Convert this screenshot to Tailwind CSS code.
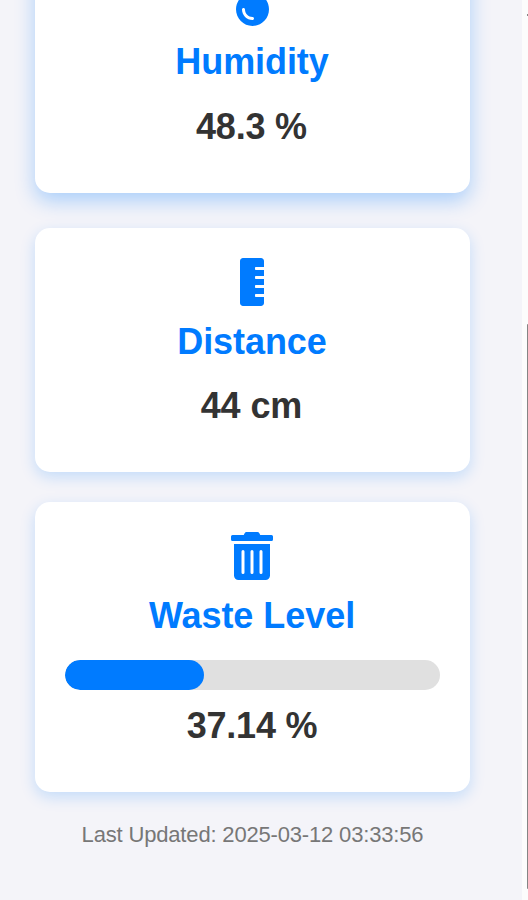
<!DOCTYPE html>
<html lang="en">
<head>
<meta charset="utf-8">
<title>Waste Monitor</title>
<script src="https://cdn.jsdelivr.net/npm/@tailwindcss/browser@4"></script>
</head>
<body class="h-[900px] overflow-hidden bg-[#fcfcfc] font-['Liberation_Sans',Arial,sans-serif]">
<div class="flex h-full justify-between overflow-hidden">
  <main class="flex h-full w-[522px] shrink-0 flex-col bg-[#f4f4f9] pl-[35px] text-center">
    <section class="-mt-[52px] flex h-[245px] w-[435px] shrink-0 flex-col items-center rounded-[15px] bg-white px-[30px] pt-[30px] shadow-[0_8px_20px_rgba(0,123,255,0.3)]">
      <svg class="mr-px h-12 w-[33px] shrink-0 fill-[#007bff]" viewBox="0 0 352 512"><path d="M205.22 22.09c-7.94-28.78-49.44-30.12-58.44 0C100.01 179.85 0 222.72 0 333.91 0 432.35 78.72 512 176 512s176-79.65 176-178.09c0-111.75-99.79-153.34-146.78-311.82zM176 448c-61.75 0-112-50.25-112-112 0-8.84 7.16-16 16-16s16 7.16 16 16c0 44.11 35.89 80 80 80 8.84 0 16 7.16 16 16s-7.16 16-16 16z"/></svg>
      <h2 class="mt-[15px] mr-px text-[36px] leading-[41px] font-bold tracking-[-0.08px] text-[#007bff]">Humidity</h2>
      <p class="mt-6 mr-[2px] text-[36px] leading-[41px] font-bold tracking-[-0.2px] text-[#333]">48.3 %</p>
    </section>
    <section class="mt-[35px] flex h-[244px] w-[435px] shrink-0 flex-col items-center rounded-[15px] bg-white px-[30px] pt-[30px] shadow-[0_5px_15px_rgba(0,123,255,0.2)]">
      <svg class="mr-[2px] h-12 w-6 shrink-0 fill-[#007bff]" viewBox="0 0 256 512"><path d="M168 416c-4.42 0-8-3.58-8-8v-16c0-4.42 3.58-8 8-8h88v-64h-88c-4.42 0-8-3.58-8-8v-16c0-4.42 3.58-8 8-8h88v-64h-88c-4.42 0-8-3.58-8-8v-16c0-4.42 3.58-8 8-8h88v-64h-88c-4.42 0-8-3.58-8-8v-16c0-4.42 3.58-8 8-8h88V32c0-17.67-14.33-32-32-32H32C14.33 0 0 14.33 0 32v448c0 17.67 14.33 32 32 32h192c17.67 0 32-14.33 32-32v-64h-88z"/></svg>
      <h2 class="mt-[15px] mr-px text-[36px] leading-[41px] font-bold tracking-[-0.08px] text-[#007bff]">Distance</h2>
      <p class="mt-[23px] mr-[2px] text-[36px] leading-[41px] font-bold tracking-[-0.1px] text-[#333]">44 cm</p>
    </section>
    <section class="mt-[30px] flex h-[290px] w-[435px] shrink-0 flex-col items-center rounded-[15px] bg-white px-[30px] pt-[30px] shadow-[0_5px_15px_rgba(0,123,255,0.2)]">
      <svg class="mr-[2px] h-12 w-[42px] shrink-0 fill-[#007bff]" viewBox="0 0 448 512"><path d="M32 464a48 48 0 0 0 48 48h288a48 48 0 0 0 48-48V128H32zm272-256a16 16 0 0 1 32 0v224a16 16 0 0 1-32 0zm-96 0a16 16 0 0 1 32 0v224a16 16 0 0 1-32 0zm-96 0a16 16 0 0 1 32 0v224a16 16 0 0 1-32 0zM432 32H312l-9.4-18.7A24 24 0 0 0 281.1 0H166.8a23.72 23.72 0 0 0-21.4 13.3L136 32H16A16 16 0 0 0 0 48v32a16 16 0 0 0 16 16h416a16 16 0 0 0 16-16V48a16 16 0 0 0-16-16z"/></svg>
      <h2 class="mt-[15px] mr-px text-[36px] leading-[41px] font-bold tracking-[-0.05px] text-[#007bff]">Waste Level</h2>
      <div class="mt-6 h-[30px] w-full shrink-0 overflow-hidden rounded-[15px] bg-[#e0e0e0]"><div class="h-full rounded-[15px] bg-[#007bff]" style="width:37.14%"></div></div>
      <p class="mt-[15px] mr-px text-[36px] leading-[41px] font-bold tracking-[-0.25px] text-[#333]">37.14 %</p>
    </section>
    <footer class="mt-[30px] w-[435px] text-[22px] leading-[25px] tracking-[-0.17px] text-[#777]">Last Updated: 2025-03-12 03:33:56</footer>
  </main>
  <!-- Scrollbar: arrow above, thumb below -->
  <aside class="flex w-px shrink-0 flex-col">
    <div class="mt-[14px] h-[2px] bg-[#858585]"></div>
    <div class="mt-[308px] h-[565px] rounded-tl-[1px] rounded-bl-[1px] bg-[#858585]"></div>
  </aside>
</div>
</body>
</html>
